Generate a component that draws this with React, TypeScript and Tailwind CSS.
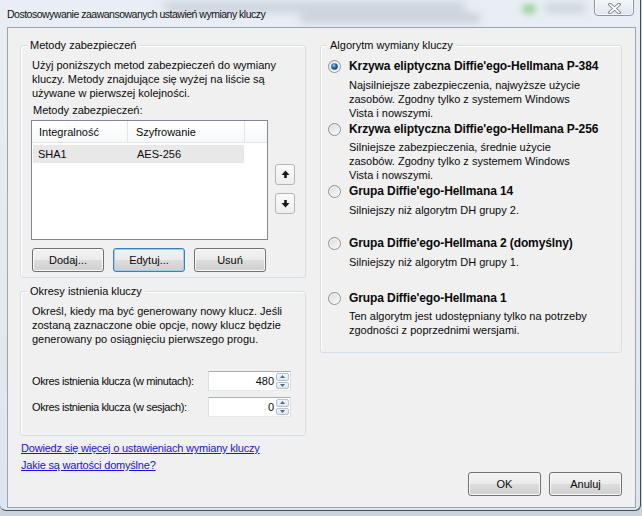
import type { ReactNode } from "react";

// Win7-style "advanced key exchange settings" dialog

const ALGORITHMS = [
  {
    title: "Krzywa eliptyczna Diffie'ego-Hellmana P-384",
    lines: ["Najsilniejsze zabezpieczenia, najwyższe użycie", "zasobów. Zgodny tylko z systemem Windows", "Vista i nowszymi."],
    checked: true,
    top: "mt-[12px]",
    gap: "mt-[4px]",
  },
  {
    title: "Krzywa eliptyczna Diffie'ego-Hellmana P-256",
    lines: ["Silniejsze zabezpieczenia, średnie użycie", "zasobów. Zgodny tylko z systemem Windows", "Vista i nowszymi."],
    top: "mt-[1px]",
    gap: "mt-[3px]",
  },
  {
    title: "Grupa Diffie'ego-Hellmana 14",
    lines: ["Silniejszy niż algorytm DH grupy 2."],
    top: "mt-[1px]",
    gap: "mt-[4px]",
  },
  {
    title: "Grupa Diffie'ego-Hellmana 2 (domyślny)",
    lines: ["Silniejszy niż algorytm DH grupy 1."],
    top: "mt-[18px]",
    gap: "mt-[4px]",
  },
  {
    title: "Grupa Diffie'ego-Hellmana 1",
    lines: ["Ten algorytm jest udostępniany tylko na potrzeby", "zgodności z poprzednimi wersjami."],
    top: "mt-[21px]",
    gap: "mt-[3px]",
  },
];

function GroupBox({ label, className, children }: { label: string; className: string; children: ReactNode }) {
  return (
    <div className={`relative rounded-[3px] border border-[#d5dfe5] shadow-[inset_1px_1px_0_#ffffff] ${className}`}>
      <span className="absolute left-[6px] top-[-8px] bg-[#f0f0f0] px-[3px] leading-[14px]">{label}</span>
      {children}
    </div>
  );
}

function Button({ children, focused = false, className = "" }: { children: ReactNode; focused?: boolean; className?: string }) {
  return (
    <div
      className={`flex h-[24px] items-center justify-center rounded-[3px] border bg-[linear-gradient(#f2f2f2_0%,#ebebeb_50%,#dddddd_50%,#cfcfcf_100%)] ${
        focused ? "border-[#3c7fb1] shadow-[inset_0_0_0_1px_#8fd3f5]" : "border-[#707070] shadow-[inset_0_0_0_1px_#fafafa]"
      } ${className}`}
    >
      {children}
    </div>
  );
}

function MoveButton({ down = false }: { down?: boolean }) {
  return (
    <div className="flex h-[21px] w-[20px] items-center justify-center rounded-[3px] border border-[#b5b5b5] bg-[linear-gradient(#fbfbfb,#eeeeee)]">
      <svg width="9" height="9" viewBox="0 0 9 9" className={down ? "rotate-180" : ""}>
        <polygon points="4.5,0.5 8.5,5 0.5,5" fill="#1a1a1a" />
        <rect x="3.2" y="4.5" width="2.6" height="3.5" fill="#1a1a1a" />
      </svg>
    </div>
  );
}

function SpinHalf({ down = false }: { down?: boolean }) {
  return (
    <div className="flex flex-1 items-center justify-center rounded-[2px] border border-[#b4c2d3] bg-[linear-gradient(#f3f6fa,#dce5f0)]">
      <svg width="5" height="3" viewBox="0 0 5 3" className={down ? "rotate-180" : ""}>
        <polygon points="2.5,0 5,3 0,3" fill="#4e6a8f" />
      </svg>
    </div>
  );
}

function SpinBox({ value }: { value: string }) {
  return (
    <div className="flex h-[20px] w-[83px] shrink-0 border border-t-[#abadb3] border-x-[#dbdfe6] border-b-[#e3e9ef] bg-white">
      <span className="flex flex-1 items-center justify-end pr-[1px]">{value}</span>
      <div className="flex w-[15px] flex-col gap-px p-px">
        <SpinHalf />
        <SpinHalf down />
      </div>
    </div>
  );
}

function Radio({ checked = false }: { checked?: boolean }) {
  return (
    <svg width="13" height="13" viewBox="0 0 13 13" className="shrink-0">
      <defs>
        <linearGradient id="rb-fill" x1="0" y1="0" x2="1" y2="1">
          <stop offset="0" stopColor="#d6d6d6" />
          <stop offset="1" stopColor="#ffffff" />
        </linearGradient>
        <radialGradient id="rb-dot" cx="0.4" cy="0.35" r="0.7">
          <stop offset="0" stopColor="#a9d8f8" />
          <stop offset="0.4" stopColor="#2f78c2" />
          <stop offset="1" stopColor="#0b2f66" />
        </radialGradient>
      </defs>
      <circle cx="6.5" cy="6.5" r="6" fill="url(#rb-fill)" stroke="#8f9295" />
      <circle cx="6.5" cy="6.5" r="4.5" fill="none" stroke="#f4f4f4" strokeWidth="1" />
      {checked && <circle cx="6.5" cy="6.5" r="3.3" fill="url(#rb-dot)" />}
    </svg>
  );
}

function TitleBar() {
  return (
    <div className="relative h-[27px] shrink-0 overflow-hidden">
      {/* blurred content seen through the glass */}
      <div className="absolute left-[165px] top-[2px] h-[10px] w-[300px] bg-[#9aa4b0] opacity-40 blur-[5px]" />
      <div className="absolute left-[300px] top-[14px] h-[8px] w-[180px] bg-[#8d97a3] opacity-40 blur-[4px]" />
      <div className="absolute left-[522px] top-[4px] h-[10px] w-[14px] rounded-full bg-[#63c35c] opacity-60 blur-[3px]" />
      <div className="absolute left-[545px] top-[4px] h-[8px] w-[40px] bg-[#9aa4b0] opacity-40 blur-[4px]" />
      <span className="absolute left-[7px] top-[7px] whitespace-nowrap text-[10.5px] leading-[14px] tracking-[-0.5px] text-[#111]">
        Dostosowywanie zaawansowanych ustawień wymiany kluczy
      </span>
      <div className="absolute right-[6px] top-[-2px] flex h-[18px] w-[40px] items-center justify-center rounded-b-[4px] border border-[#8b95a2] bg-[linear-gradient(#f4f7fa,#dfe6ee)] shadow-[inset_0_0_0_1px_rgba(255,255,255,0.7)]">
        <svg width="13" height="11" viewBox="0 0 13 11" className="mt-[2px]">
          <path d="M2 1.5 L11 9.5 M11 1.5 L2 9.5" stroke="#6f7985" strokeWidth="3.6" strokeLinecap="round" />
          <path d="M2 1.5 L11 9.5 M11 1.5 L2 9.5" stroke="#ffffff" strokeWidth="1.8" strokeLinecap="round" />
        </svg>
      </div>
    </div>
  );
}

export default function App() {
  return (
    <div className="relative h-[516px] w-[642px] overflow-hidden bg-[#c9d4df] font-['Liberation_Sans',Arial,sans-serif] text-[11px] leading-[14px] text-[#0a0a0a]">
      <div className="flex h-[511px] w-[641px] flex-col rounded-b-[6px] border-b border-r border-[#444c56] bg-[linear-gradient(#e8eef4,#dde5ee)]">
        <TitleBar />

        <div className="ml-[7px] flex h-[481px] w-[629px] flex-col border border-[#9aa5b1] bg-[#f0f0f0]">
          <div className="flex flex-1 gap-[14px] pl-[12px] pt-[17px]">
            {/* left column */}
            <div className="flex w-[286px] flex-col">
              <GroupBox label="Metody zabezpieczeń" className="h-[233px] pl-[10px] pt-[12px]">
                <p className="ml-[1px] whitespace-nowrap">
                  Użyj poniższych metod zabezpieczeń do wymiany
                  <br />
                  kluczy. Metody znajdujące się wyżej na liście są
                  <br />
                  używane w pierwszej kolejności.
                </p>
                <p className="ml-[2px] mt-[3px]">Metody zabezpieczeń:</p>
                <div className="mt-[3px] flex gap-[7px]">
                  <div className="h-[120px] w-[237px] border border-[#828790] bg-white">
                    <div className="flex h-[22px] border-b border-[#e5e5e5] bg-[linear-gradient(#ffffff,#f6f7f8)]">
                      <div className="flex w-[96px] items-center border-r border-[#e5e5e5] pl-[7px]">Integralność</div>
                      <div className="flex w-[117px] items-center border-r border-[#e5e5e5] pl-[8px]">Szyfrowanie</div>
                      <div className="flex-1" />
                    </div>
                    <div className="ml-[1px] mt-[2px] flex h-[18px] w-[211px] items-center bg-[#e8e8e8]">
                      <span className="w-[95px] pl-[5px]">SHA1</span>
                      <span className="pl-[9px]">AES-256</span>
                    </div>
                  </div>
                  <div className="mt-[44px] flex flex-col gap-[8px]">
                    <MoveButton />
                    <MoveButton down />
                  </div>
                </div>
                <div className="ml-[1px] mt-[8px] flex gap-[9px]">
                  <Button className="w-[72px]">Dodaj...</Button>
                  <Button className="w-[72px]" focused>
                    Edytuj...
                  </Button>
                  <Button className="w-[72px]">Usuń</Button>
                </div>
              </GroupBox>

              <GroupBox label="Okresy istnienia kluczy" className="mt-[13px] h-[145px] pl-[11px] pt-[12px]">
                <p className="whitespace-nowrap">
                  Określ, kiedy ma być generowany nowy klucz. Jeśli
                  <br />
                  zostaną zaznaczone obie opcje, nowy klucz będzie
                  <br />
                  generowany po osiągnięciu pierwszego progu.
                </p>
                <div className="mt-[25px] flex h-[20px] items-center justify-between pr-[14px]">
                  <span className="whitespace-nowrap tracking-[-0.4px]">Okres istnienia klucza (w minutach):</span>
                  <SpinBox value="480" />
                </div>
                <div className="mt-[6px] flex h-[20px] items-center justify-between pr-[14px]">
                  <span className="whitespace-nowrap tracking-[-0.4px]">Okres istnienia klucza (w sesjach):</span>
                  <SpinBox value="0" />
                </div>
              </GroupBox>

              <div className="mt-[5px] flex flex-col items-start gap-[3px] pl-[1px] tracking-[-0.2px] text-[#1414ee]">
                <span className="underline">Dowiedz się więcej o ustawieniach wymiany kluczy</span>
                <span className="underline">Jakie są wartości domyślne?</span>
              </div>
            </div>

            {/* right column */}
            <GroupBox label="Algorytm wymiany kluczy" className="h-[308px] w-[302px] pl-[7px]">
              {ALGORITHMS.map((a) => (
                <div key={a.title} className={a.top}>
                  <div className="flex h-[16px] items-center gap-[8px]">
                    <Radio checked={a.checked} />
                    <span className="whitespace-nowrap text-[12px] font-bold tracking-[-0.1px]">{a.title}</span>
                  </div>
                  <p className={`${a.gap} whitespace-nowrap pl-[21px]`}>
                    {a.lines.map((l, i) => (
                      <span key={i} className="block">
                        {l}
                      </span>
                    ))}
                  </p>
                </div>
              ))}
            </GroupBox>
          </div>

          <div className="flex justify-end gap-[8px] pb-[11px] pr-[13px]">
            <Button className="w-[73px]">OK</Button>
            <Button className="w-[73px]">Anuluj</Button>
          </div>
        </div>
      </div>
    </div>
  );
}
